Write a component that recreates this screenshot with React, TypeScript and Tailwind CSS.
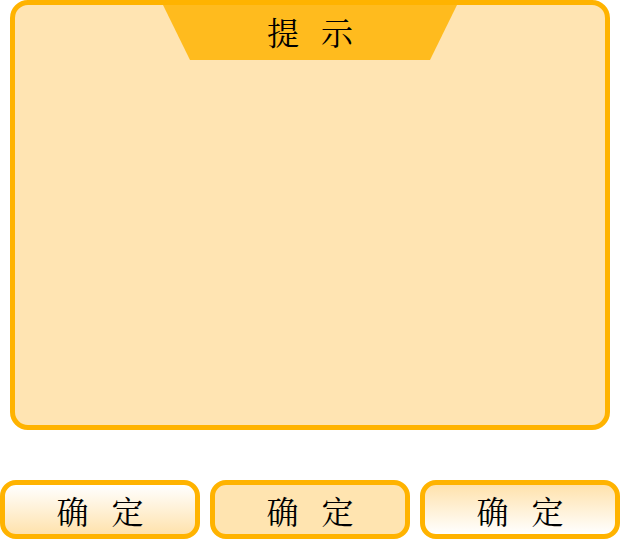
export default function App() {
  const buttons = [
    'bg-gradient-to-b from-[#FFFFFF] to-[#FFE2AC]',
    'bg-[#FFE4B0]',
    'bg-gradient-to-b from-[#FFE2AC] to-[#FFFFFF]',
  ];

  return (
    <div className="w-[620px] h-[540px] bg-white" style={{ fontFamily: '"Noto Serif CJK SC", "AR PL UMing CN", serif' }}>
      {/* Dialog panel */}
      <div className="ml-[10px] w-[600px] h-[430px] border-[5px] border-[#FFB300] rounded-[18px] bg-[#FFE4B2] flex flex-col items-center">
        <div className="w-[294px] h-[55px] pb-[3px] bg-[#FFBB1E] flex items-center justify-center gap-[22px] text-[32px] leading-none text-black [clip-path:polygon(0_0,100%_0,calc(100%-27px)_100%,27px_100%)]">
          <span>提</span>
          <span>示</span>
        </div>
      </div>

      {/* Buttons */}
      <div className="mt-[50px] flex gap-[10px]">
        {buttons.map((bg, i) => (
          <button
            key={i}
            className={`w-[200px] h-[59px] border-[5px] border-[#FFB300] rounded-[16px] ${bg} flex items-center justify-center gap-[23px] text-[32px] leading-none text-black`}
          >
            <span>确</span>
            <span>定</span>
          </button>
        ))}
      </div>
    </div>
  );
}
